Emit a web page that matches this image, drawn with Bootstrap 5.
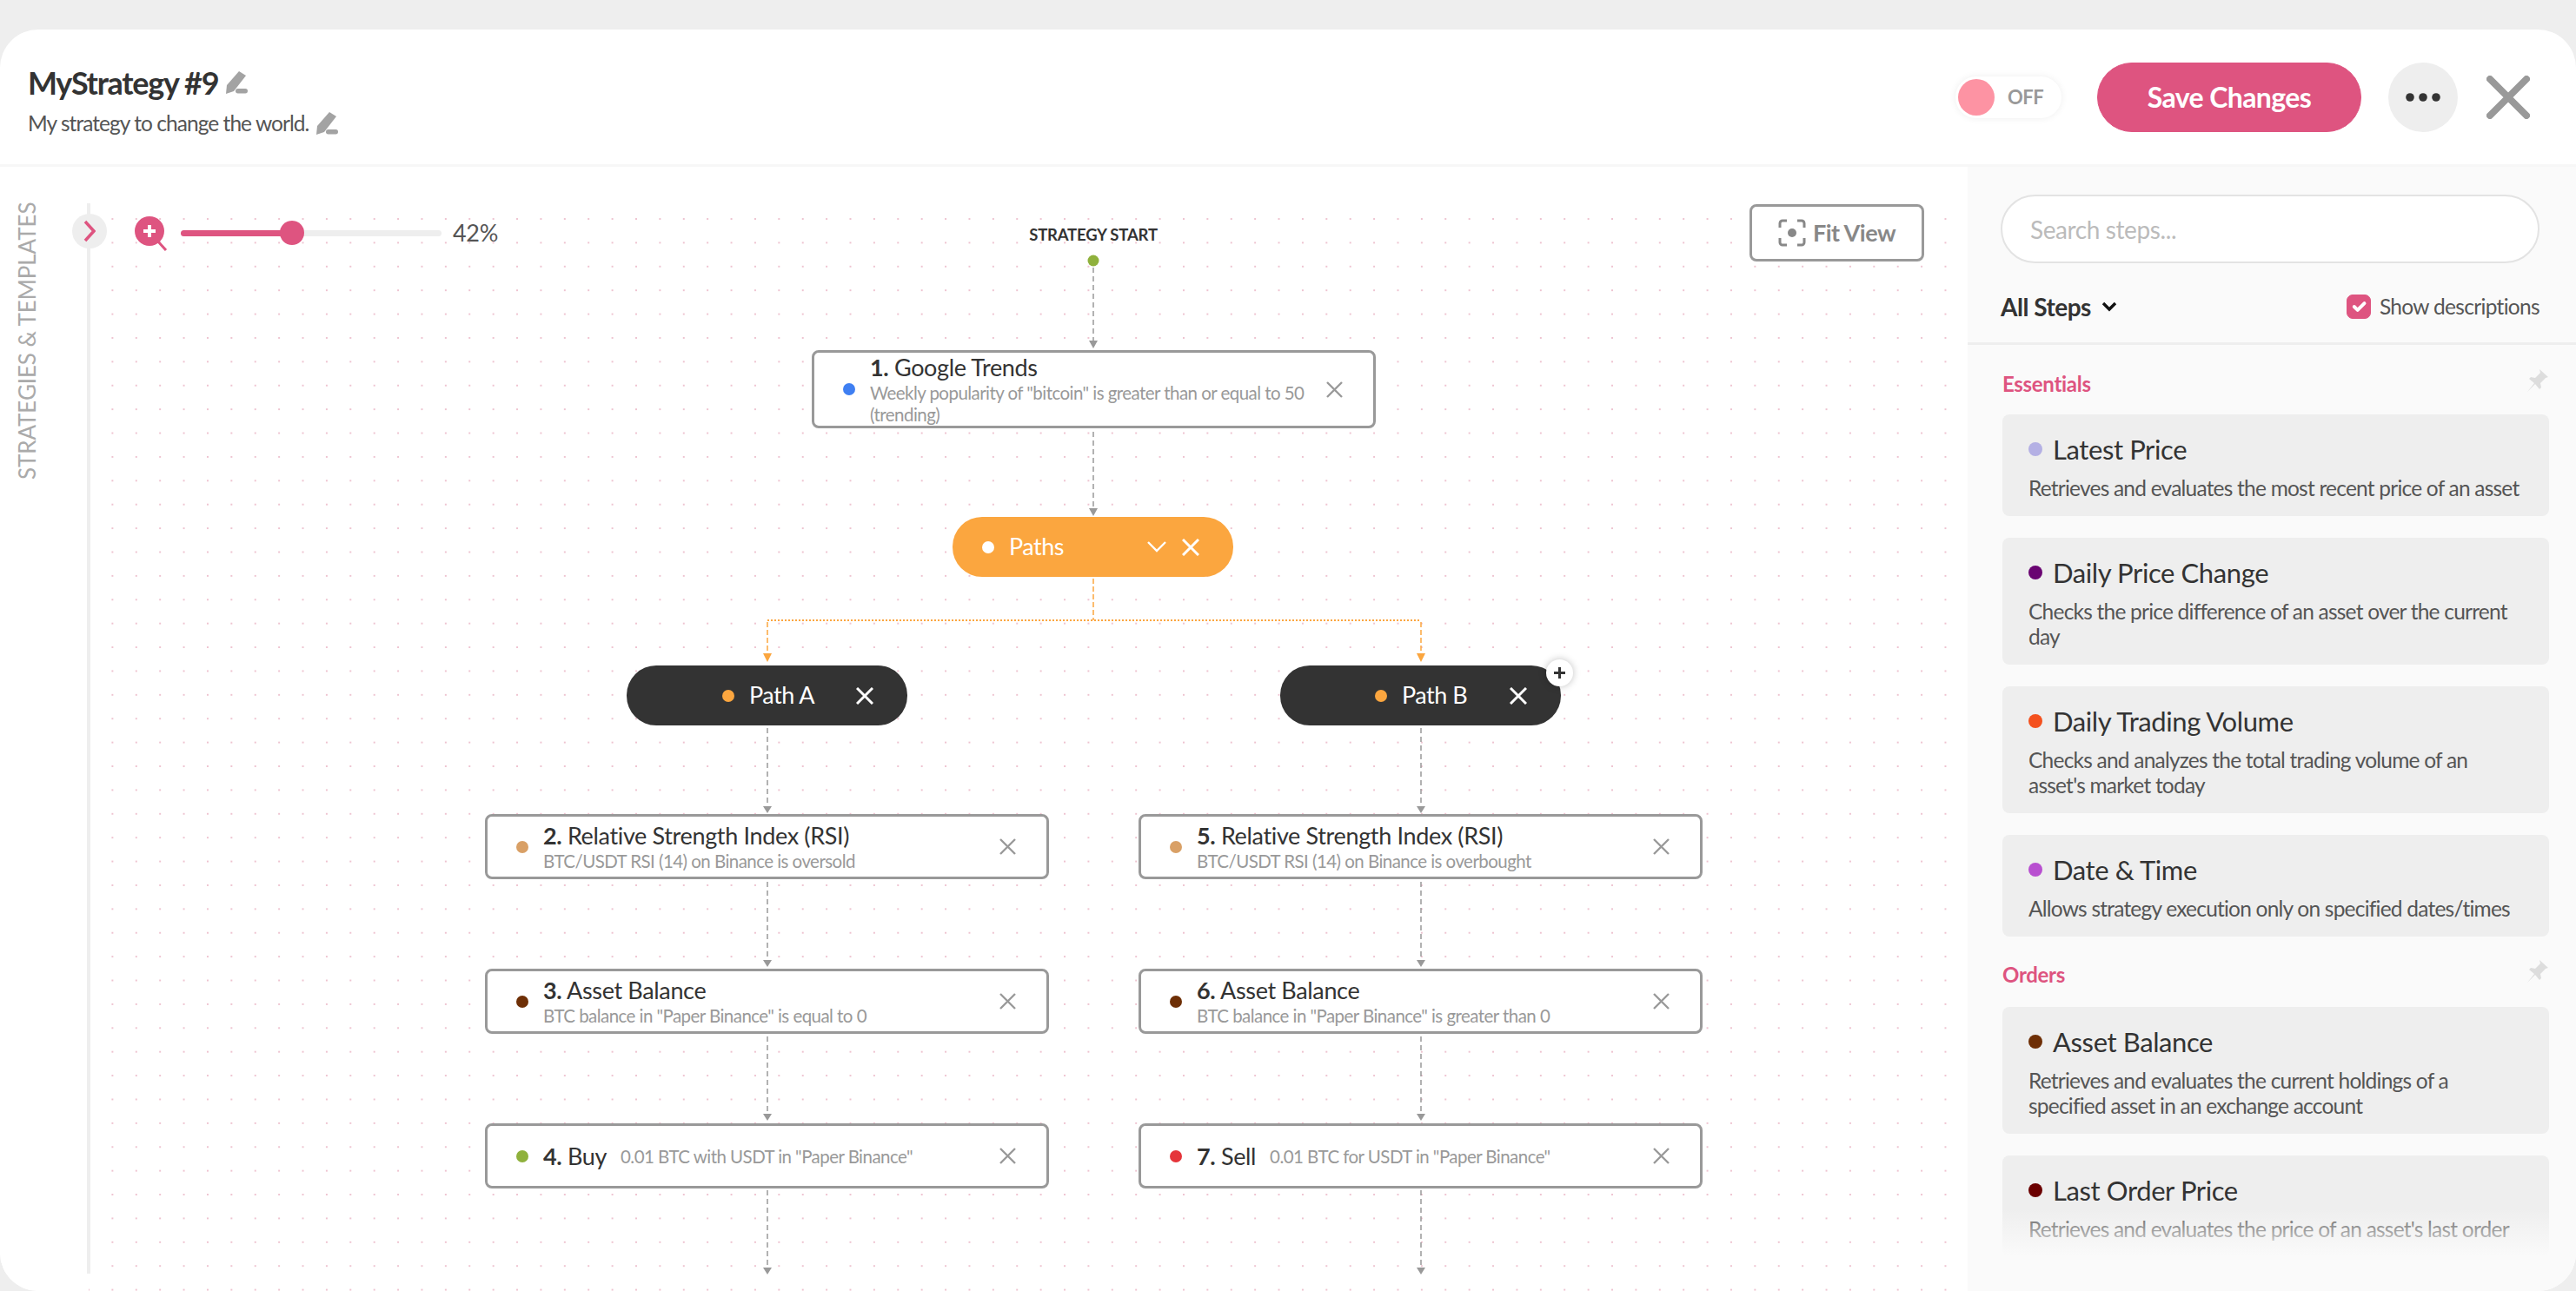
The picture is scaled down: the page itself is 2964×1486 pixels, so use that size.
<!DOCTYPE html>
<html lang="en">
<head>
    <meta charset="UTF-8">
    <title>MyStrategy #9</title>
    <link href="https://cdn.jsdelivr.net/npm/bootstrap@5.3.2/dist/css/bootstrap.min.css" rel="stylesheet">
    <style>
        html, body { height: 100%; overflow: hidden; }
        body { background: #eeeeee; font-family: Lato, "Noto Sans", sans-serif; color: #333; padding-top: 34px; }
        .editor { height: 1452px; background: #fff; border-radius: 44px; overflow: hidden; }

        /* header */
        .top-bar { height: 158px; padding: 0 53px 0 32px; border-bottom: 3px solid #f7f7f7; }
        .strategy-head { padding-top: 8px; }
        .strategy-name { font-size: 36px; font-weight: 700; line-height: 44px; letter-spacing: -1.3px; margin: 0; }
        .strategy-desc { font-size: 24.5px; line-height: 32px; color: #555; letter-spacing: -.95px; margin-top: 9px; }
        .edit-ico { width: 29px; height: 26px; fill: #a3a3a3; margin-left: 5px; }
        .power-toggle { width: 122px; height: 48px; border-radius: 24px; box-shadow: 0 0 8px rgba(0,0,0,.07); padding-left: 3px; margin-right: 41px; }
        .power-knob { width: 42px; height: 42px; border-radius: 50%; background: #fd93a3; }
        .power-label { font-size: 22px; font-weight: 700; color: #999; margin-left: 15px; letter-spacing: -.5px; }
        .btn-save { width: 304px; height: 80px; background: #de5480; border-color: #de5480; color: #fff; font-size: 32px; font-weight: 700; letter-spacing: -.6px; padding: 0; }
        .btn-more { width: 80px; height: 80px; background: #eeeeee; border: 0; padding: 0; margin-left: 31px; }
        .btn-shut { width: 50px; height: 50px; margin-left: 33px; }

        /* canvas */
        .work-area { height: 1294px; }
        .board { width: 2264px; height: 100%; background: #fff; }
        .dot-layer { position: absolute; left: 102px; top: 52px; right: 0; bottom: 0;
            background-image: radial-gradient(circle, #eec3d0 0.8px, transparent 1.1px);
            background-size: 27.4px 27.4px; background-position: -13.7px -5.7px; }
        .board-lines { position: absolute; left: 0; top: 0; }
        .rail-line { position: absolute; left: 100px; top: 42px; width: 4px; height: 1232px; background: #eeeeee; }
        .rail-label { position: absolute; left: 12px; top: 42px; height: 318px; writing-mode: vertical-rl; transform: rotate(180deg); font-size: 26px; color: #aaa; white-space: nowrap; text-align: left; letter-spacing: -.1px; }
        .rail-toggle { position: absolute; left: 83px; top: 54px; width: 40px; height: 40px; border-radius: 50%; background: #eee; }
        .zoom-ico { position: absolute; left: 155px; top: 57px; width: 40px; height: 40px; }
        .zoom-track { position: absolute; left: 208px; top: 73px; width: 300px; height: 7px; border-radius: 4px; background: #eee; }
        .zoom-fill { height: 100%; background: #de5480; border-radius: 4px; }
        .zoom-knob { position: absolute; left: 322px; top: 62px; width: 28px; height: 28px; border-radius: 50%; background: #de5480; }
        .zoom-value { position: absolute; left: 521px; top: 58px; font-size: 27px; line-height: 36px; color: #555; letter-spacing: -.3px; }
        .btn-fit { position: absolute; left: 2013px; top: 43px; width: 201px; height: 66px; border: 3px solid #999; border-radius: 8px; background: #fff; color: #888; font-size: 27px; font-weight: 700; letter-spacing: -.5px; padding: 0; }
        .start-label { position: absolute; left: 1158px; width: 200px; top: 66px; text-align: center; font-size: 18.5px; line-height: 24px; font-weight: 700; color: #333; letter-spacing: -.2px; }

        /* nodes */
        .step { position: absolute; width: 649px; background: #fff; border: 3px solid #999; border-radius: 8px; padding: 0 35px 0 33px; }
        .step-dot { width: 14px; height: 14px; border-radius: 50%; flex: none; margin-right: 17px; }
        .step-title { font-size: 27px; line-height: 32px; color: #333; letter-spacing: -.35px; white-space: nowrap; }
        .step-title b { font-weight: 700; }
        .step-sub { font-size: 20.5px; line-height: 25px; color: #999; letter-spacing: -.55px; padding-top: 1px; }
        .step-x { width: 19px; height: 19px; flex: none; stroke: #999; stroke-width: 2.4; margin-left: auto; }
        .pill { position: absolute; height: 69px; border-radius: 34px; color: #fff; font-size: 27px; letter-spacing: -.5px; }
        .pill-dot { width: 14px; height: 14px; border-radius: 50%; flex: none; }
        .pill-label { margin-left: 17px; }
        .pill-x { width: 20px; height: 20px; stroke: #fff; stroke-width: 3; flex: none; margin-right: 39px; }
        .pill-chev { margin-left: auto; margin-right: 18px; }
        .paths-node { left: 1096px; top: 403px; width: 323px; background: #fba63f; padding-left: 34px; }
        .path-a { left: 721px; top: 574px; width: 323px; background: #333; padding-left: 110px; }
        .path-b { left: 1473px; top: 574px; width: 323px; background: #333; padding-left: 109px; }
        .add-bubble { position: absolute; left: 1779px; top: 567px; width: 31px; height: 31px; border-radius: 50%; background: #fff; box-shadow: 0 0 8px rgba(0,0,0,.25); }
        .s1 { left: 934px; top: 211px; height: 90px; }
        .s2 { left: 558px; top: 745px; height: 75px; }
        .s3 { left: 558px; top: 923px; height: 75px; }
        .s4 { left: 558px; top: 1101px; height: 75px; }
        .s5 { left: 1310px; top: 745px; height: 75px; }
        .s6 { left: 1310px; top: 923px; height: 75px; }
        .s7 { left: 1310px; top: 1101px; height: 75px; }

        /* step picker */
        .picker { width: 700px; background: #fafafa; }
        .picker-head { height: 205px; padding: 32px 42px 0 38px; border-bottom: 3px solid #eeeeee; }
        .picker-search { height: 79px; font-size: 28px; border: 2px solid #e3e3e3; padding-left: 32px; letter-spacing: -.4px; background: #fff; }
        .picker-search::placeholder { color: #bbb; }
        .picker-row { margin-top: 29px; }
        .picker-filter { font-size: 28px; font-weight: 700; letter-spacing: -.5px; color: #333; gap: 12px; }
        .show-desc { font-size: 24.5px; color: #555; letter-spacing: -.68px; }
        .show-desc .form-check-input { width: 28px; height: 28px; margin: 0 10px 0 0; border-radius: 7px; background-color: #de5480; border-color: #de5480; float: none; }
        .picker-list { padding: 0 31px 0 40px; height: 1089px; overflow: hidden; }
        .group-head { height: 80px; padding-top: 27px; color: #de5480; font-size: 24px; font-weight: 700; letter-spacing: -.3px; }
        .group-orders { margin-top: -26px; height: 82px; }
        .pin-ico { width: 28px; height: 28px; fill: #ddd; margin-right: 0; }
        .tile { background: #eeeeee; border-radius: 8px; padding: 20px 30px 18px; margin-bottom: 25px; }
        .tile-title { font-size: 31px; line-height: 40px; letter-spacing: -.4px; color: #333; margin-bottom: 10px; }
        .tile-dot { width: 16px; height: 16px; border-radius: 50%; flex: none; margin-right: 12px; }
        .tile-desc { font-size: 24.5px; line-height: 29px; color: #555; letter-spacing: -.78px; }
        .picker-fade { position: absolute; left: 0; right: 0; bottom: 0; height: 95px; background: linear-gradient(to bottom, rgba(250,250,250,0), #fafafa 58%); }
    </style>
</head>
<body>
    <div class="editor d-flex flex-column">
        <div class="top-bar d-flex align-items-center justify-content-between flex-shrink-0">
            <div class="strategy-head">
                <h1 class="strategy-name d-flex align-items-center">MyStrategy #9
                    <svg class="edit-ico" viewBox="0 0 29 26"><path d="M19 0l8 5-14 18-9 3 1-10z"/><rect x="15" y="20" width="14" height="5.5" rx="2.7"/></svg>
                </h1>
                <div class="strategy-desc d-flex align-items-center">My strategy to change the world.
                    <svg class="edit-ico" viewBox="0 0 29 26"><path d="M19 0l8 5-14 18-9 3 1-10z"/><rect x="15" y="20" width="14" height="5.5" rx="2.7"/></svg>
                </div>
            </div>
            <div class="d-flex align-items-center">
                <div class="power-toggle d-flex align-items-center">
                    <span class="power-knob"></span><span class="power-label">OFF</span>
                </div>
                <button class="btn btn-save rounded-pill">Save Changes</button>
                <button class="btn btn-more rounded-circle d-flex align-items-center justify-content-center">
                    <svg width="40" height="12" viewBox="0 0 40 12" fill="#333"><circle cx="5" cy="6" r="4.8"/><circle cx="20" cy="6" r="4.8"/><circle cx="35" cy="6" r="4.8"/></svg>
                </button>
                <svg class="btn-shut" viewBox="0 0 50 50" stroke="#999" stroke-width="8" stroke-linecap="round"><path d="M4 4l42 42M46 4L4 46"/></svg>
            </div>
        </div>

        <div class="work-area d-flex">
            <div class="board position-relative">
                <div class="dot-layer"></div>
                <svg class="board-lines" width="2264" height="1294" viewBox="0 192 2264 1294" fill="none">
                    <g stroke="#999" stroke-width="1.5" stroke-dasharray="6 4">
                        <path d="M1258 308V392M1258 497V584M883 838V928M1635 838V928M883 1015V1104M1635 1015V1104M883 1193V1282M1635 1193V1282M883 1370V1459M1635 1370V1459"/>
                    </g>
                    <g fill="#999">
                        <path d="M1253 392h10l-5 9zM1253 585h10l-5 9zM878 928h10l-5 8zM1630 928h10l-5 8zM878 1105h10l-5 8zM1630 1105h10l-5 8zM878 1282h10l-5 8zM1630 1282h10l-5 8zM878 1459h10l-5 8zM1630 1459h10l-5 8z"/>
                    </g>
                    <g stroke="#fba63f" stroke-width="1.5">
                        <path d="M1258 666V714" stroke-dasharray="6 3"/>
                        <path d="M883 714H1635" stroke-width="2" stroke-dasharray="2 2"/>
                        <path d="M883 716V752M1635 716V752" stroke-dasharray="6 3"/>
                    </g>
                    <path fill="#fba63f" d="M878 752h10l-5 10zM1630 752h10l-5 10z"/>
                    <circle cx="1258" cy="300" r="6.5" fill="#8fb13c"/>
                </svg>
                <div class="rail-line"></div>
                <div class="rail-label">STRATEGIES &amp; TEMPLATES</div>
                <div class="rail-toggle d-flex align-items-center justify-content-center">
                    <svg width="14" height="26" viewBox="0 0 14 26" fill="none" stroke="#de5480" stroke-width="3.5"><path d="M2 2l10 11L2 24"/></svg>
                </div>
                <svg class="zoom-ico" viewBox="0 0 40 40"><path d="M26 28l10 11" stroke="#de5480" stroke-width="3"/><circle cx="17" cy="17" r="17" fill="#de5480"/><path d="M17 10v14M10 17h14" stroke="#fff" stroke-width="4"/></svg>
                <div class="zoom-track"><div class="zoom-fill" style="width: 42%"></div></div>
                <div class="zoom-knob"></div>
                <div class="zoom-value">42%</div>
                <button class="btn-fit d-flex align-items-center justify-content-center gap-2">
                    <svg width="32" height="32" viewBox="0 0 32 32" fill="none" stroke="#888" stroke-width="3"><path d="M2 10V5a3 3 0 0 1 3-3h5M22 2h5a3 3 0 0 1 3 3v5M30 22v5a3 3 0 0 1-3 3h-5M10 30H5a3 3 0 0 1-3-3v-5"/><circle cx="16" cy="16" r="5" fill="#888" stroke="none"/></svg>
                    Fit View
                </button>
                <div class="start-label">STRATEGY START</div>

                <div class="step s1 d-flex align-items-center">
                    <span class="step-dot" style="background:#3f7ff2"></span>
                    <div class="flex-grow-1">
                        <div class="step-title"><b>1.</b> Google Trends</div>
                        <div class="step-sub">Weekly popularity of "bitcoin" is greater than or equal to 50 (trending)</div>
                    </div>
                    <svg class="step-x" viewBox="0 0 19 19"><path d="M1 1l17 17M18 1L1 18"/></svg>
                </div>

                <div class="pill paths-node d-flex align-items-center">
                    <span class="pill-dot bg-white"></span>
                    <span class="pill-label">Paths</span>
                    <svg class="pill-chev" width="22" height="13" viewBox="0 0 22 13" fill="none" stroke="#fff" stroke-width="2.4"><path d="M1 1l10 10L21 1"/></svg>
                    <svg class="pill-x" viewBox="0 0 20 20"><path d="M1 1l18 18M19 1L1 19"/></svg>
                </div>
                <div class="pill path-a d-flex align-items-center">
                    <span class="pill-dot" style="background:#fba63f"></span>
                    <span class="pill-label">Path A</span>
                    <svg class="pill-x ms-auto" viewBox="0 0 20 20"><path d="M1 1l18 18M19 1L1 19"/></svg>
                </div>
                <div class="pill path-b d-flex align-items-center">
                    <span class="pill-dot" style="background:#fba63f"></span>
                    <span class="pill-label">Path B</span>
                    <svg class="pill-x ms-auto" viewBox="0 0 20 20"><path d="M1 1l18 18M19 1L1 19"/></svg>
                </div>
                <div class="add-bubble d-flex align-items-center justify-content-center">
                    <svg width="13" height="13" viewBox="0 0 13 13" stroke="#333" stroke-width="3"><path d="M6.5 0v13M0 6.5h13"/></svg>
                </div>

                <div class="step s2 d-flex align-items-center">
                    <span class="step-dot" style="background:#d9a066"></span>
                    <div>
                        <div class="step-title"><b>2.</b> Relative Strength Index (RSI)</div>
                        <div class="step-sub">BTC/USDT RSI (14) on Binance is oversold</div>
                    </div>
                    <svg class="step-x" viewBox="0 0 19 19"><path d="M1 1l17 17M18 1L1 18"/></svg>
                </div>
                <div class="step s3 d-flex align-items-center">
                    <span class="step-dot" style="background:#6e2f06"></span>
                    <div>
                        <div class="step-title"><b>3.</b> Asset Balance</div>
                        <div class="step-sub">BTC balance in "Paper Binance" is equal to 0</div>
                    </div>
                    <svg class="step-x" viewBox="0 0 19 19"><path d="M1 1l17 17M18 1L1 18"/></svg>
                </div>
                <div class="step s4 d-flex align-items-center">
                    <span class="step-dot" style="background:#8fb13c"></span>
                    <div class="step-title"><b>4.</b> Buy</div>
                    <div class="step-sub ms-3">0.01 BTC with USDT in "Paper Binance"</div>
                    <svg class="step-x" viewBox="0 0 19 19"><path d="M1 1l17 17M18 1L1 18"/></svg>
                </div>
                <div class="step s5 d-flex align-items-center">
                    <span class="step-dot" style="background:#d9a066"></span>
                    <div>
                        <div class="step-title"><b>5.</b> Relative Strength Index (RSI)</div>
                        <div class="step-sub">BTC/USDT RSI (14) on Binance is overbought</div>
                    </div>
                    <svg class="step-x" viewBox="0 0 19 19"><path d="M1 1l17 17M18 1L1 18"/></svg>
                </div>
                <div class="step s6 d-flex align-items-center">
                    <span class="step-dot" style="background:#6e2f06"></span>
                    <div>
                        <div class="step-title"><b>6.</b> Asset Balance</div>
                        <div class="step-sub">BTC balance in "Paper Binance" is greater than 0</div>
                    </div>
                    <svg class="step-x" viewBox="0 0 19 19"><path d="M1 1l17 17M18 1L1 18"/></svg>
                </div>
                <div class="step s7 d-flex align-items-center">
                    <span class="step-dot" style="background:#e5343a"></span>
                    <div class="step-title"><b>7.</b> Sell</div>
                    <div class="step-sub ms-3">0.01 BTC for USDT in "Paper Binance"</div>
                    <svg class="step-x" viewBox="0 0 19 19"><path d="M1 1l17 17M18 1L1 18"/></svg>
                </div>
            </div>

            <div class="picker position-relative flex-grow-1">
                <div class="picker-head">
                    <input class="form-control rounded-pill picker-search" type="text" placeholder="Search steps...">
                    <div class="picker-row d-flex align-items-center justify-content-between">
                        <div class="picker-filter d-flex align-items-center">All Steps
                            <svg width="18" height="12" viewBox="0 0 18 12" fill="none" stroke="#111" stroke-width="3.4"><path d="M2 2l7 7 7-7"/></svg>
                        </div>
                        <label class="show-desc d-flex align-items-center">
                            <input class="form-check-input" type="checkbox" checked>Show descriptions
                        </label>
                    </div>
                </div>
                <div class="picker-list">
                    <div class="group-head d-flex justify-content-between">Essentials
                        <svg class="pin-ico" viewBox="0 0 28 28"><path d="M17 1l10 9-3 1-6 6 1 5-2 2-5-6-9 9 8-10-6-5 2-2 5 1 6-6z"/></svg>
                    </div>
                    <div class="tile">
                        <div class="tile-title d-flex align-items-center"><span class="tile-dot" style="background:#b4b0e4"></span>Latest Price</div>
                        <div class="tile-desc">Retrieves and evaluates the most recent price of an asset</div>
                    </div>
                    <div class="tile">
                        <div class="tile-title d-flex align-items-center"><span class="tile-dot" style="background:#6a0572"></span>Daily Price Change</div>
                        <div class="tile-desc">Checks the price difference of an asset over the current day</div>
                    </div>
                    <div class="tile">
                        <div class="tile-title d-flex align-items-center"><span class="tile-dot" style="background:#f4511e"></span>Daily Trading Volume</div>
                        <div class="tile-desc">Checks and analyzes the total trading volume of an asset's market today</div>
                    </div>
                    <div class="tile">
                        <div class="tile-title d-flex align-items-center"><span class="tile-dot" style="background:#b84fd0"></span>Date &amp; Time</div>
                        <div class="tile-desc">Allows strategy execution only on specified dates/times</div>
                    </div>
                    <div class="group-head group-orders d-flex justify-content-between">Orders
                        <svg class="pin-ico" viewBox="0 0 28 28"><path d="M17 1l10 9-3 1-6 6 1 5-2 2-5-6-9 9 8-10-6-5 2-2 5 1 6-6z"/></svg>
                    </div>
                    <div class="tile">
                        <div class="tile-title d-flex align-items-center"><span class="tile-dot" style="background:#6e2f06"></span>Asset Balance</div>
                        <div class="tile-desc">Retrieves and evaluates the current holdings of a specified asset in an exchange account</div>
                    </div>
                    <div class="tile">
                        <div class="tile-title d-flex align-items-center"><span class="tile-dot" style="background:#6b0000"></span>Last Order Price</div>
                        <div class="tile-desc">Retrieves and evaluates the price of an asset's last order</div>
                    </div>
                </div>
                <div class="picker-fade"></div>
            </div>
        </div>
    </div>

    <script src="https://cdn.jsdelivr.net/npm/bootstrap@5.3.2/dist/js/bootstrap.bundle.min.js"></script>
</body>
</html>
